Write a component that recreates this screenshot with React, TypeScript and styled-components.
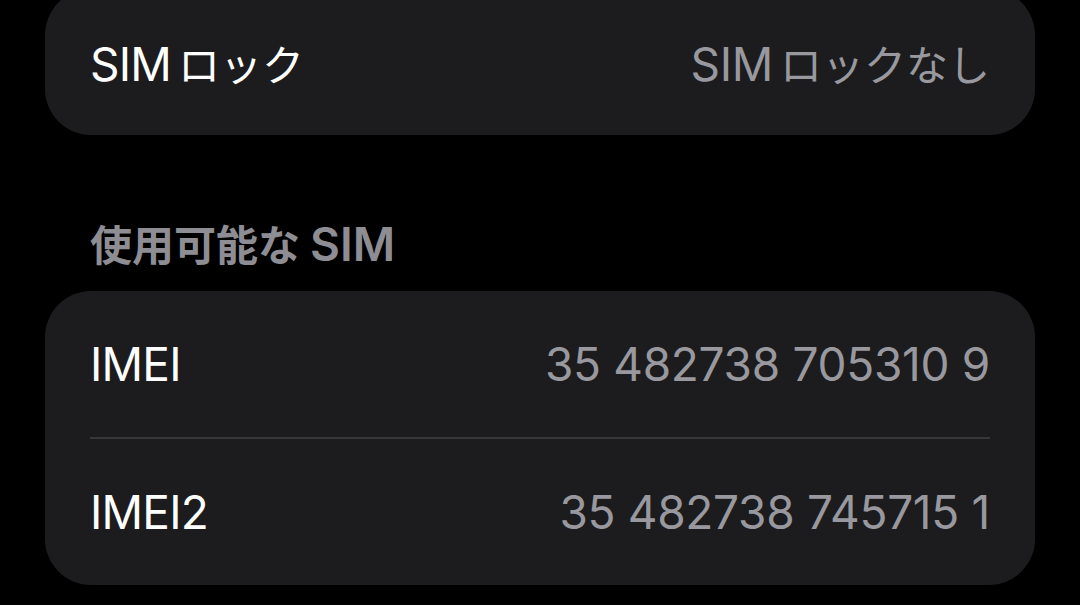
import styled, { createGlobalStyle } from "styled-components";

const GlobalStyle = createGlobalStyle`
	html, body {
		margin: 0;
		padding: 0;
		background: #000;
	}

	body {
		font-family: Inter, "Noto Sans CJK JP", sans-serif;
		-webkit-font-smoothing: antialiased;
	}
`;

const Page = styled.div`
	width: 1080px;
	height: 605px;
	overflow: hidden;
	background: #000;
	padding: 0 45px;
	box-sizing: border-box;
`;

const Card = styled.div<{ $clipTop?: boolean }>`
	background: #1c1c1e;
	border-radius: 46px;
	margin-top: ${(p) => (p.$clipTop ? "-11px" : "0")};
	padding: 0 45px;
`;

const Row = styled.div`
	height: 146px;
	display: flex;
	align-items: center;
	justify-content: space-between;
	font-size: 46px;

	& + & {
		border-top: 2px solid #38383a;
	}
`;

const Label = styled.span`
	color: #fff;
	letter-spacing: -0.8px;
`;

const Value = styled.span`
	color: #98989e;
	letter-spacing: -0.3px;
`;

// kana runs sit a touch smaller than the latin ones, with a little air between
const Kana = styled.span<{ $size?: number }>`
	font-size: ${(p) => p.$size ?? 42}px;
	margin-left: 7px;
	letter-spacing: 0;
`;

const SectionHeader = styled.div`
	margin-top: 78px;
	padding: 8px 45px 0;
	height: 78px;
	box-sizing: border-box;
	font-size: 46px;
	font-weight: 600;
	line-height: 1;
	color: #8d8d93;

	${Kana} {
		margin-left: 0;
		margin-right: 10px;
	}
`;

const rows = [
	{ label: "IMEI", value: "35 482738 705310 9" },
	{ label: "IMEI2", value: "35 482738 745715 1" },
];

const App = () => {
	return (
		<>
			<GlobalStyle />
			<Page>
				<Card $clipTop>
					<Row>
						<Label>
							SIM<Kana>ロック</Kana>
						</Label>
						<Value>
							SIM<Kana>ロックなし</Kana>
						</Value>
					</Row>
				</Card>
				<SectionHeader>
					<Kana $size={42}>使用可能な</Kana>SIM
				</SectionHeader>
				<Card>
					{rows.map((r) => (
						<Row key={r.label}>
							<Label>{r.label}</Label>
							<Value>{r.value}</Value>
						</Row>
					))}
				</Card>
			</Page>
		</>
	);
};

export default App;
